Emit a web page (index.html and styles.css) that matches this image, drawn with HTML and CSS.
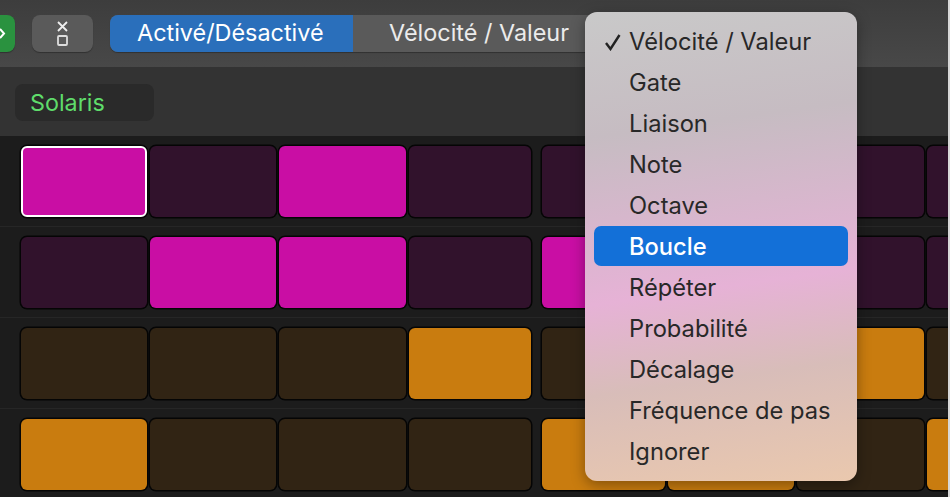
FILE: index.html
```html
<!DOCTYPE html>
<html lang="fr">
<head>
    <meta charset="UTF-8">
    <title>Step Sequencer</title>
    <link rel="stylesheet" href="styles.css">
</head>
<body>
    <div class="app">
        <div class="toolbar">
            <button class="green-btn">
                <svg width="15" height="37" viewBox="0 0 15 37"><path d="M0 14l4 4.500-4 4.500" fill="none" stroke="#fff" stroke-width="2"/></svg>
            </button>
            <button class="icon-btn">
                <svg width="14" height="26" viewBox="0 0 14 26"><path d="M2 1l9 9M11 1l-9 9" fill="none" stroke="#eee" stroke-width="1.800"/><rect x="2" y="15" width="9" height="9" rx="1" fill="none" stroke="#ddd" stroke-width="1.800"/></svg>
            </button>
            <div class="segments">
                <div class="segment active">Activé/Désactivé</div>
                <div class="segment">Vélocité / Valeur</div>
            </div>
        </div>
        <div class="subbar">
            <div class="pattern-name">Solaris</div>
        </div>
        <div class="grid">
            <div class="row pink">
                <div class="cell on selected"></div><div class="cell"></div><div class="cell on"></div><div class="cell"></div>
                <div class="cell"></div><div class="cell"></div><div class="cell"></div><div class="cell"></div>
            </div>
            <div class="row pink">
                <div class="cell"></div><div class="cell on"></div><div class="cell on"></div><div class="cell"></div>
                <div class="cell on"></div><div class="cell"></div><div class="cell"></div><div class="cell"></div>
            </div>
            <div class="row amber">
                <div class="cell"></div><div class="cell"></div><div class="cell"></div><div class="cell on"></div>
                <div class="cell"></div><div class="cell"></div><div class="cell on"></div><div class="cell"></div>
            </div>
            <div class="row amber">
                <div class="cell on"></div><div class="cell"></div><div class="cell"></div><div class="cell"></div>
                <div class="cell on"></div><div class="cell on"></div><div class="cell"></div><div class="cell on"></div>
            </div>
        </div>
        <ul class="menu">
            <li class="menu-item">
                <svg class="check" width="18" height="18" viewBox="0 0 18 18"><path d="M2 10l4.500 6 9-14" fill="none" stroke="#222" stroke-width="2.400"/></svg>
                Vélocité / Valeur
            </li>
            <li class="menu-item">Gate</li>
            <li class="menu-item">Liaison</li>
            <li class="menu-item">Note</li>
            <li class="menu-item">Octave</li>
            <li class="menu-item highlighted">Boucle</li>
            <li class="menu-item">Répéter</li>
            <li class="menu-item">Probabilité</li>
            <li class="menu-item">Décalage</li>
            <li class="menu-item">Fréquence de pas</li>
            <li class="menu-item">Ignorer</li>
        </ul>
    </div>
</body>
</html>
```

FILE: styles.css
```css
body {
    margin: 0;
    font-family: 'Inter', 'Liberation Sans', sans-serif;
    background: #1c1c1c;
}
.app {
    position: relative;
    width: 948px;
    height: 497px;
    overflow: hidden;
    border-right: 2px solid #d8d8d8;
}
.toolbar {
    display: flex;
    align-items: flex-start;
    height: 67px;
    padding-top: 15px;
    box-sizing: border-box;
    background: linear-gradient(#3d3d3d, #484848);
}
.green-btn {
    width: 15px;
    height: 37px;
    padding: 0;
    border: none;
    border-radius: 0 8px 8px 0;
    background: #2a923f;
    box-shadow: 0 1px 1px rgba(0, 0, 0, 0.3);
}
.icon-btn {
    display: flex;
    align-items: center;
    justify-content: center;
    width: 61px;
    height: 37px;
    margin-left: 17px;
    padding: 0;
    border: none;
    border-radius: 8px;
    background: #5a5a5a;
    box-shadow: 0 1px 1px rgba(0, 0, 0, 0.3);
}
.segments {
    display: flex;
    margin-left: 17px;
    height: 37px;
    border-radius: 8px;
    background: #5a5a5a;
    box-shadow: 0 1px 1px rgba(0, 0, 0, 0.3);
}
.segment {
    width: 232px;
    padding-left: 36px;
    line-height: 35px;
    font-size: 23.400px;
    color: #ebebeb;
}
.segment.active {
    width: 243px;
    padding-left: 27px;
    box-sizing: border-box;
    border-radius: 8px 0 0 8px;
    background: #2a6fbb;
    color: #fff;
}
.subbar {
    height: 69px;
    padding: 17px 0 0 15px;
    box-sizing: border-box;
    background: #333;
}
.pattern-name {
    width: 139px;
    height: 37px;
    padding-left: 15px;
    box-sizing: border-box;
    border-radius: 8px;
    background: #2a2a2a;
    font-size: 23.300px;
    line-height: 38px;
    color: #5fdc6b;
}
.row {
    display: grid;
    grid-template-columns: 129.300px 129.700px 129.500px 125.500px 133.300px 129.200px 129.800px 30px;
    height: 91px;
    padding: 8px 0 0 19px;
    box-sizing: border-box;
    border-bottom: 1px solid #262626;
}
.row .cell:nth-child(5) {
    margin-left: 8.800px;
}
.cell {
    height: 71.500px;
    margin: 1.500px;
    border-radius: 6px;
    box-shadow: 0 0 0 1.500px #050505;
}
.pink .cell { background: #31122c; }
.pink .cell.on { background: #c90ea4; }
.amber .cell { background: #312414; }
.amber .cell.on { background: #c97c0f; }
.cell.selected {
    border: 2px solid #fff;
    height: 67.500px;
}
.menu {
    position: absolute;
    left: 585px;
    top: 12px;
    width: 272px;
    height: 469px;
    margin: 0;
    padding: 9px;
    box-sizing: border-box;
    list-style: none;
    border-radius: 12px;
    background: linear-gradient(172deg, #c9c9c9 0%, #c6bcc2 25%, #e6b2d6 58%, #d8bdb9 76%, #eac8ae 100%);
    box-shadow: 0 4px 14px rgba(0, 0, 0, 0.35);
}
.menu-item {
    position: relative;
    height: 41px;
    padding-left: 35px;
    line-height: 42px;
    font-size: 23.700px;
    color: #282828;
}
.menu-item.highlighted {
    height: 40px;
    margin-bottom: 1px;
    border-radius: 7px;
    line-height: 41px;
    background: #1370d8;
    color: #fff;
    font-weight: 500;
}
.check {
    position: absolute;
    left: 10px;
    top: 12px;
}
```
